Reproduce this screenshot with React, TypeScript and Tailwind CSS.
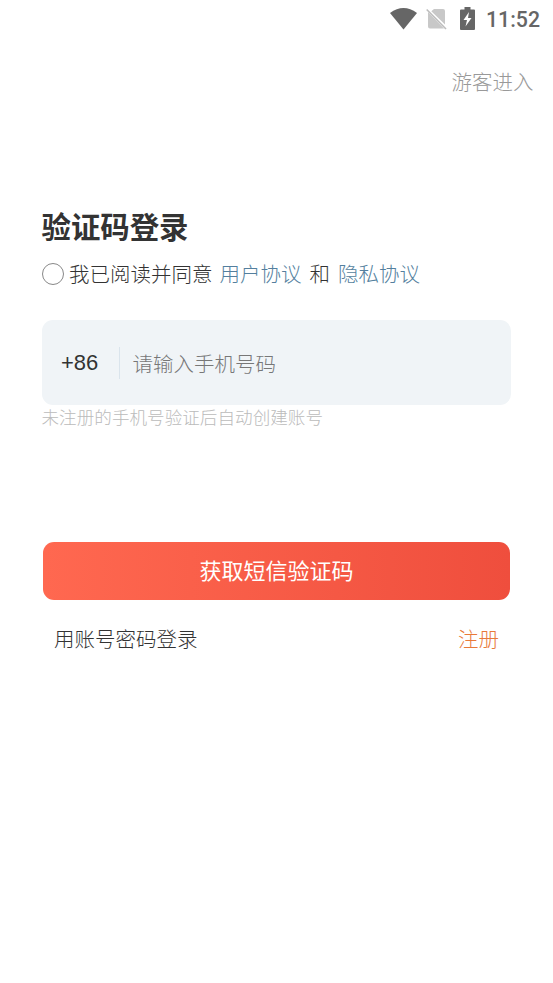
export default function App() {
  return (
    <main className="flex h-[983px] w-[553px] flex-col overflow-hidden bg-white font-['Noto_Sans_CJK_SC',sans-serif] font-light text-[#333]">
      <header className="flex h-[37px] items-center justify-end pr-[13px] text-[#666]">
        <svg className="mr-[9px]" width="27" height="22" viewBox="0 0 27 22" fill="currentColor"><path d="M13.5 21.5 0 5Q13.5-5 27 5Z" /></svg>
        <svg className="mr-[13px]" width="21" height="22" viewBox="0 0 21 22"><path d="M8 1H17Q19 1 19 3V16.5L5.3 3.2ZM2 4V18.5Q2 20.5 4 20.5H18Z" fill="#c8c8c8" /><path d="M0.7 1.5 20 21" stroke="#bdbdbd" strokeWidth="1.6" /></svg>
        <svg className="mr-[11px]" width="15" height="23" viewBox="0 0 15 23"><path d="M4.5 0h6v2.5H14Q15 2.5 15 3.5V22q0 1-1 1H1q-1 0-1-1V3.5q0-1 1-1h3.5Z" fill="currentColor" /><path d="M9 5 3.5 13H7L5.5 19.5 11.5 11H8Z" fill="white" /></svg>
        <span className="relative top-[1px] font-['Roboto'] text-[21.3px] font-medium leading-none">11:52</span>
      </header>
      <div className="flex h-[87px] items-center justify-end pr-[19.5px] pt-[2px] text-[20.5px] text-[#999]">游客进入</div>
      <section className="ml-[41.5px] mr-[42px] mt-[76px]">
        <h1 className="h-[50px] text-[29.4px] font-bold leading-[50px]">验证码登录</h1>
        <div className="mt-[8px] flex h-[31px] items-center text-[20.5px] leading-[30px]">
          <span className="mr-[5.5px] size-[22px] rounded-full border-[1.5px] border-[#888]" />
          <p className="flex pb-[2px]"><span>我已阅读并同意</span><span className="ml-[7px] text-[#547f9e]">用户协议</span><span className="mx-[8px]">和</span><span className="text-[#547f9e]">隐私协议</span></p>
        </div>
        <div className="mt-[31px] flex h-[85px] items-center rounded-[11px] bg-[#f0f4f7] pl-[19.5px]">
          <span className="w-[57.5px] font-['Liberation_Sans'] text-[22px]">+86</span><span className="mr-[13px] h-[32px] w-px bg-[#dae4ec]" /><span className="relative top-[1px] text-[20.5px] text-[#777]">请输入手机号码</span>
        </div>
        <p className="h-[26px] text-[17.6px] leading-[24px] text-[#bbb]">未注册的手机号验证后自动创建账号</p>
        <button className="ml-[1.5px] mt-[111px] flex h-[57.5px] w-[467px] items-center justify-center rounded-[11px] bg-linear-to-r from-[#ff6850] to-[#ef4e3d] pb-[2px] text-[22px] font-normal text-white">获取短信验证码</button>
        <div className="ml-[12.5px] mr-[12px] mt-[23.5px] flex justify-between text-[20.5px] leading-[30px]"><span>用账号密码登录</span><span className="text-[#e87939]">注册</span></div>
      </section>
    </main>
  );
}
